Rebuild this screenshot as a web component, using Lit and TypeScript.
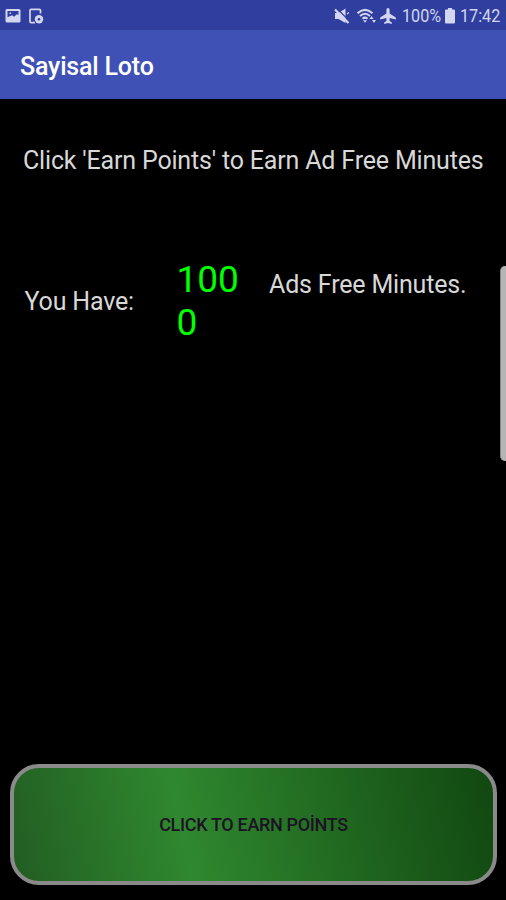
import { LitElement, html, css } from "lit";
import { customElement, property } from "lit/decorators.js";

@customElement("status-bar")
class StatusBar extends LitElement {
  static styles = css`
    :host { display: flex; align-items: center; height: 30px; box-sizing: border-box; padding: 2px 5px 0 5px; background: #303f9f; color: #d3d6ee; }
    svg { display: block; fill: currentColor; flex: none; }
    .line { fill: none; stroke: currentColor; }
    .cut { fill: #303f9f; }
    .slash { fill: none; stroke: #303f9f; }
    .gap { margin-left: 7px; }
    .plane { margin-left: 3px; }
    .spacer { flex: 1; }
    .text { font: 400 19px/22px Roboto, sans-serif; white-space: nowrap; }
    .pct { width: 38px; margin-left: 6px; }
    .battery { margin-left: 4px; }
    .time { width: 41px; margin-left: 4px; }
    .narrow { display: block; transform: scaleX(0.85); transform-origin: left center; }
  `;
  render() {
    return html`
      <svg width="16" height="16" viewBox="0 0 16 16">
        <rect x="0.500" y="1" width="15" height="13.500" rx="1.500" />
        <path class="cut" d="M2.500 3h11v4l-1.500-.8-3 2.600-2-1.600-4.500 2z M4.500 4.500h1.500v1.500h-1.500z" fill-rule="evenodd" />
      </svg>
      <svg class="gap" width="16" height="16" viewBox="0 0 16 16">
        <path class="line" stroke-width="1.700" d="M12.500 5.500V2.500Q12.500 1.300 11.300 1.300H3.200Q2 1.300 2 2.500v11q0 1.200 1.200 1.200H7" />
        <circle cx="11" cy="11.200" r="4.200" />
        <circle class="cut" cx="11" cy="11.200" r="1.300" />
      </svg>
      <span class="spacer"></span>
      <svg width="16" height="16" viewBox="0 0 16 16">
        <path d="M1 5h3.500L11.500 0.500v14.500L4.500 11H1z" />
        <path class="slash" stroke-width="1.200" d="M2.500 0L16 13.500" />
        <path class="line" stroke-width="2.200" d="M1 1.500l13.500 13.500" />
        <path class="line" stroke-width="1.200" d="M13 6l2-1.500" />
      </svg>
      <svg class="gap" width="20" height="16" viewBox="0 0 20 16">
        <path class="line" stroke-width="2" d="M0.500 5.200Q8-1.500 15.500 5.200M3 8Q8 3.500 13 8M5.500 10.700Q8 8.500 10.500 10.700" />
        <path d="M6 12.200h4l-2 2.500zM12.500 11l2-3 2 3zM15 12h4l-2 3z" />
      </svg>
      <svg class="plane" width="16" height="16" viewBox="0 0 16 16">
        <path d="M8 0q1.600 0 1.600 2v3.500L15.800 9.500v2L9.600 10v3l2.200 1.500V16L8 15l-3.800 1v-1.500l2.200-1.500V10L0.200 11.500V9.500l6.200-4V2Q6.400 0 8 0z" />
      </svg>
      <span class="text pct"><span class="narrow">100%</span></span>
      <svg class="battery" width="12" height="16" viewBox="0 0 12 16"><path d="M4 0h4v1.500h2q1 0 1 1v12q0 1-1 1H2q-1 0-1-1v-12q0-1 1-1h2z" /></svg>
      <span class="text time"><span class="narrow">17:42</span></span>
    `;
  }
}

@customElement("earn-button")
class EarnButton extends LitElement {
  @property() label = "";
  static styles = css`
    :host { display: block; }
    button {
      display: block; width: 100%; height: 121px; box-sizing: border-box; padding: 1px 0 0;
      border: 4px solid #8a8a8a; border-radius: 29px;
      background: linear-gradient(78deg, #225c22 0%, #2f882f 36%, #114610 100%) border-box;
      font: 500 18px/24px Roboto, sans-serif; letter-spacing: -0.330px; color: #1d1224;
    }
  `;
  render() {
    return html`<button>${this.label}</button>`;
  }
}

@customElement("app-root")
class AppRoot extends LitElement {
  static styles = css`
    :host { display: flex; flex-direction: column; position: relative; height: 900px; overflow: hidden; background: #000; font-family: Roboto, sans-serif; color: #d8d8d8; }
    .bar { height: 69px; box-sizing: border-box; padding: 4px 20px 0; display: flex; align-items: center; background: #3f51b5; color: #fff; font-size: 25px; letter-spacing: -0.180px; font-weight: 500; line-height: 30px; }
    .hint { margin: 47px 0 0 23px; font-size: 25px; letter-spacing: -0.175px; line-height: 30px; white-space: nowrap; }
    .row { display: flex; margin-top: 82px; font-size: 25px; letter-spacing: -0.175px; line-height: 30px; white-space: nowrap; }
    .have { width: 152px; padding: 29px 0 0 24.500px; box-sizing: border-box; }
    .num { width: 68px; margin-left: 24.500px; color: #0f0; font-size: 37px; letter-spacing: 0; line-height: 43px; white-space: normal; word-break: break-all; }
    .unit { padding: 12px 0 0 24.500px; }
    .grow { flex: 1; }
    .cta { margin: 0 9px 15px 10px; }
    .handle { position: absolute; right: 0; top: 266px; width: 6px; height: 195px; box-sizing: border-box; background: #b5b5b5; border-left: 1px solid #888; border-radius: 5px 0 0 5px; }
  `;
  render() {
    return html`
      <status-bar></status-bar>
      <div class="bar">Sayisal Loto</div>
      <div class="hint">Click 'Earn Points' to Earn Ad Free Minutes</div>
      <div class="row">
        <span class="have">You Have:</span>
        <span class="num">1000</span>
        <span class="unit">Ads Free Minutes.</span>
      </div>
      <div class="grow"></div>
      <earn-button class="cta" label="CLICK TO EARN POİNTS"></earn-button>
      <div class="handle"></div>
    `;
  }
}
